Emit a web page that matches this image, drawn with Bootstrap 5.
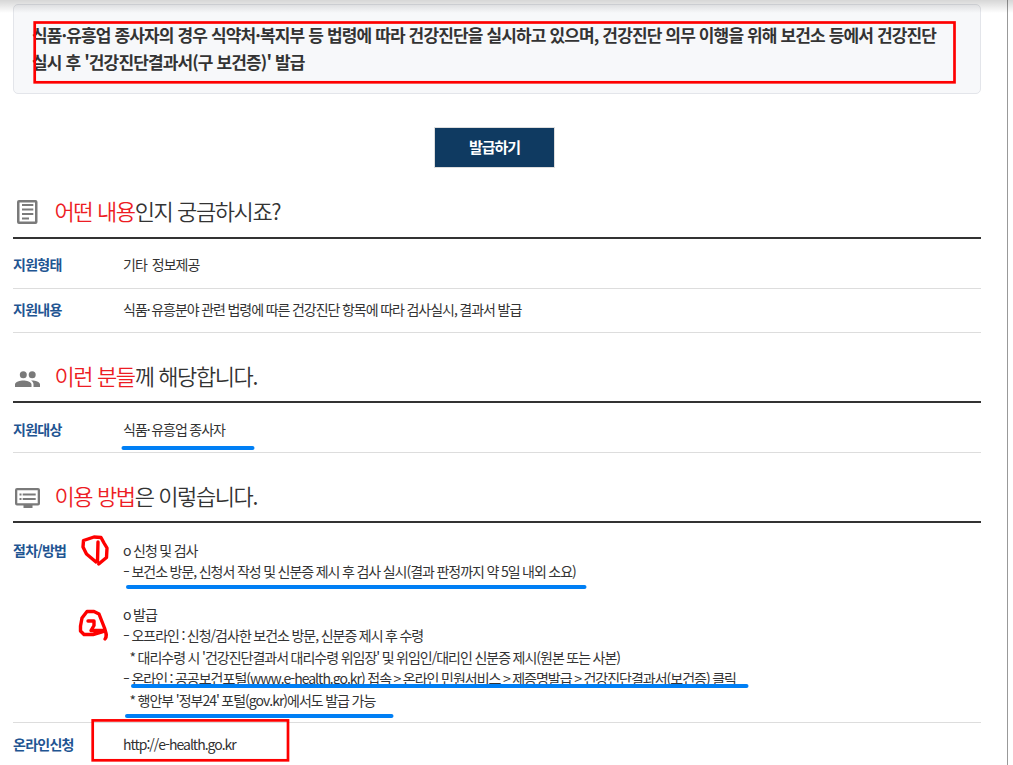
<!DOCTYPE html>
<html lang="ko">

<head>
  <meta charset="UTF-8" />
  <meta name="viewport" content="width=device-width, initial-scale=1.0" />
  <title>건강진단결과서 발급</title>
  <link href="https://cdn.jsdelivr.net/npm/bootstrap@5.3.0/dist/css/bootstrap.min.css" rel="stylesheet" />
  <style>
    :root {
      --ink: #333;
      --label-blue: #1f5592;
      --point-red: #ed1c24;
      --navy: #0f3a61;
      --line: #ddd;
    }

    body {
      font-family: "Noto Sans CJK KR", sans-serif;
      font-size: 14px;
      letter-spacing: -1px;
      color: var(--ink);
      height: 765px;
      overflow: hidden;
      white-space: nowrap;
    }

    .page-frame {
      width: 1008px;
      height: 765px;
      padding: 4px 26px 0 13px;
      border-right: 1px solid #999;
    }

    .top-shade {
      height: 13px;
      background: linear-gradient(rgba(0, 0, 0, .16), rgba(0, 0, 0, 0));
    }

    .summary-box {
      height: 90px;
      padding: 16px 18px;
      background-color: #f7f8fa;
      border: 1px solid #e3e5ea;
      border-radius: 5px;
      font-size: 17px;
      line-height: 27px;
      letter-spacing: -.86px;
    }

    .btn-issue {
      width: 121px;
      height: 41px;
      margin: 33px 5px 0 0;
      border: 1px solid var(--line);
      border-radius: 0;
      background-color: var(--navy);
      color: #fff;
      font-size: 15px;
      line-height: 37px;
      letter-spacing: -1px;
      padding: 0 0 2px;
    }

    .section-title {
      height: 70px;
      padding: 18px 0 0 1px;
      margin: 0;
      border-bottom: 2px solid #333;
      font-size: 22px;
      font-weight: 350;
      letter-spacing: -1.4px;
      line-height: 46px;
    }

    .section-title svg {
      width: 28px;
      height: 28px;
      margin-right: 12.500px;
      fill: #7a7a7a;
    }

    .section-title span {
      margin-top: -2px;
    }

    .section-title em {
      color: var(--point-red);
      font-style: normal;
    }

    .info-row {
      border-bottom: 1px solid var(--line);
      line-height: 21.45px;
    }

    .info-row dt {
      width: 110px;
      color: var(--label-blue);
      letter-spacing: -.75px;
    }

    .info-row dd {
      margin: 0;
      word-spacing: -.4px;
    }

    .bullet-dash {
      display: inline-block;
      transform: scaleX(1.4);
      transform-origin: left;
      margin-right: 2px;
    }

    .bullet-star {
      margin-left: 6.500px;
    }

    .mid-dot {
      letter-spacing: .5px;
    }

    .marker-layer {
      width: 1013px;
      height: 765px;
      fill: none;
      stroke-linecap: round;
      stroke-linejoin: round;
    }
  </style>
</head>

<body class="position-relative">
  <main class="page-frame">
    <div class="summary-box fw-bold">
      식품·유흥업 종사자의 경우 식약처·복지부 등 법령에 따라 건강진단을 실시하고 있으며, 건강진단 의무 이행을 위해 보건소 등에서 건강진단<br />
      실시 후 '건강진단결과서(구 보건증)' 발급
    </div>

    <div class="d-flex justify-content-center">
      <button type="button" class="btn btn-issue fw-bold">발급하기</button>
    </div>

    <section>
      <h2 class="section-title d-flex align-items-center" style="height: 71px; padding-top: 17px">
        <svg viewBox="0 0 28 28">
          <path fill-rule="evenodd" d="M5 3h16.500a2 2 0 0 1 2 2v20a2 2 0 0 1-2 2H5a2 2 0 0 1-2-2V5a2 2 0 0 1 2-2zm.500 2.400v19.200H21V5.400zM8 7h11.300v2H8zm0 4.500h11.300v2H8zm0 4.500h11.300v2H8zm0 4.500h7v2H8z" />
        </svg>
        <span><em>어떤 내용</em>인지 궁금하시죠?</span>
      </h2>
      <dl class="info-row d-flex m-0" style="height: 50px; padding-top: 15px">
        <dt>지원형태</dt>
        <dd>기타&nbsp; 정보제공</dd>
      </dl>
      <dl class="info-row d-flex m-0" style="height: 44px; padding-top: 10px">
        <dt>지원내용</dt>
        <dd>식품<span class="mid-dot">·</span>유흥분야 관련 법령에 따른 건강진단 항목에 따라 검사실시, 결과서 발급</dd>
      </dl>
    </section>

    <section>
      <h2 class="section-title d-flex align-items-center">
        <svg viewBox="0 0 28 28">
          <path d="M9.300 9.200a3.500 3.500 0 1 1 0 7a3.500 3.500 0 0 1 0-7zM18.200 9.200a3.500 3.500 0 1 1 0 7a3.500 3.500 0 0 1 0-7zM1 25v-2.500c0-2.800 5.200-4 8.300-4s8.200 1.200 8.200 4V25zM18 18.500c3.200 0 8 1.200 8 4V25h-6.500v-2.500c0-1.700-.9-3-2.500-3.900z" />
        </svg>
        <span><em>이런 분들</em>께 해당합니다.</span>
      </h2>
      <dl class="info-row d-flex m-0" style="height: 50px; padding-top: 16px">
        <dt>지원대상</dt>
        <dd>식품<span class="mid-dot">·</span>유흥업 종사자</dd>
      </dl>
    </section>

    <section>
      <h2 class="section-title d-flex align-items-center">
        <svg viewBox="0 0 28 28">
          <path fill-rule="evenodd" d="M3 6h21a2 2 0 0 1 2 2v13.500a2 2 0 0 1-2 2h-5.500V26H9.500v-2.500H3a2 2 0 0 1-2-2V8a2 2 0 0 1 2-2zm.300 2.300v12.900h20.400V8.300zM5.500 11.500h2v2h-2zm3.200 0h13v2h-13zM5.500 16h2v2h-2zm3.200 0h13v2h-13z" />
        </svg>
        <span><em>이용 방법</em>은 이렇습니다.</span>
      </h2>
      <dl class="info-row d-flex m-0" style="height: 200px; padding-top: 16.500px">
        <dt>절차/방법</dt>
        <dd>
          o 신청 및 검사<br />
          <span class="bullet-dash">-</span> 보건소 방문, 신청서 작성 및 신분증 제시 후 검사 실시(결과 판정까지 약 5일 내외 소요)<br />
          <br />
          o 발급<br />
          <span class="bullet-dash">-</span> 오프라인 : 신청/검사한 보건소 방문, 신분증 제시 후 수령<br />
          <span class="bullet-star">*</span> 대리수령 시 '건강진단결과서 대리수령 위임장' 및 위임인/대리인 신분증 제시(원본 또는 사본)<br />
          <span class="bullet-dash">-</span> 온라인 : 공공보건포털(www.e-health.go.kr) 접속 &gt; 온라인 민원서비스 &gt; 제증명발급 &gt; 건강진단결과서(보건증) 클릭<br />
          <span class="bullet-star">*</span> 행안부 '정부24' 포털(gov.kr)에서도 발급 가능
        </dd>
      </dl>
      <dl class="d-flex m-0 info-row border-0" style="padding-top: 10.500px">
        <dt>온라인신청</dt>
        <dd>http://e-health.go.kr</dd>
      </dl>
    </section>
  </main>

  <div class="top-shade position-absolute top-0 start-0 w-100"></div>

  <!-- hand-drawn marker notes over the page -->
  <svg class="marker-layer position-absolute top-0 start-0" viewBox="0 0 1013 765">
    <g stroke="#fe0000" stroke-width="2.700" stroke-linejoin="miter">
      <rect x="34.700" y="22.500" width="919.800" height="59.800" />
      <rect x="92.700" y="720.400" width="195.300" height="39.900" />
    </g>
    <g stroke="#007ff5" stroke-width="4">
      <path d="M123.500 448H252.500" />
      <path d="M128 587H584.500" />
      <path d="M133 686H746.500" />
      <path d="M127 716H391.500" />
    </g>
    <g stroke="#fe0000" stroke-width="3.400">
      <path d="M98 542L97.500 561M98.700 564L106.500 557.500L107 548L104 543L101 537.500L94 537L83.500 540.500L83 547L86.500 554L96 562" />
      <path d="M88 621H94V625.500L91 630.500H104M105 639C107.500 636 106 633 104.500 628L99 614L94 611.500L87 611.500L82 618L80.500 626V631L84 634.500H93L103 631.500" />
    </g>
  </svg>

  <script src="https://cdn.jsdelivr.net/npm/bootstrap@5.3.0/dist/js/bootstrap.bundle.min.js"></script>
</body>

</html>
